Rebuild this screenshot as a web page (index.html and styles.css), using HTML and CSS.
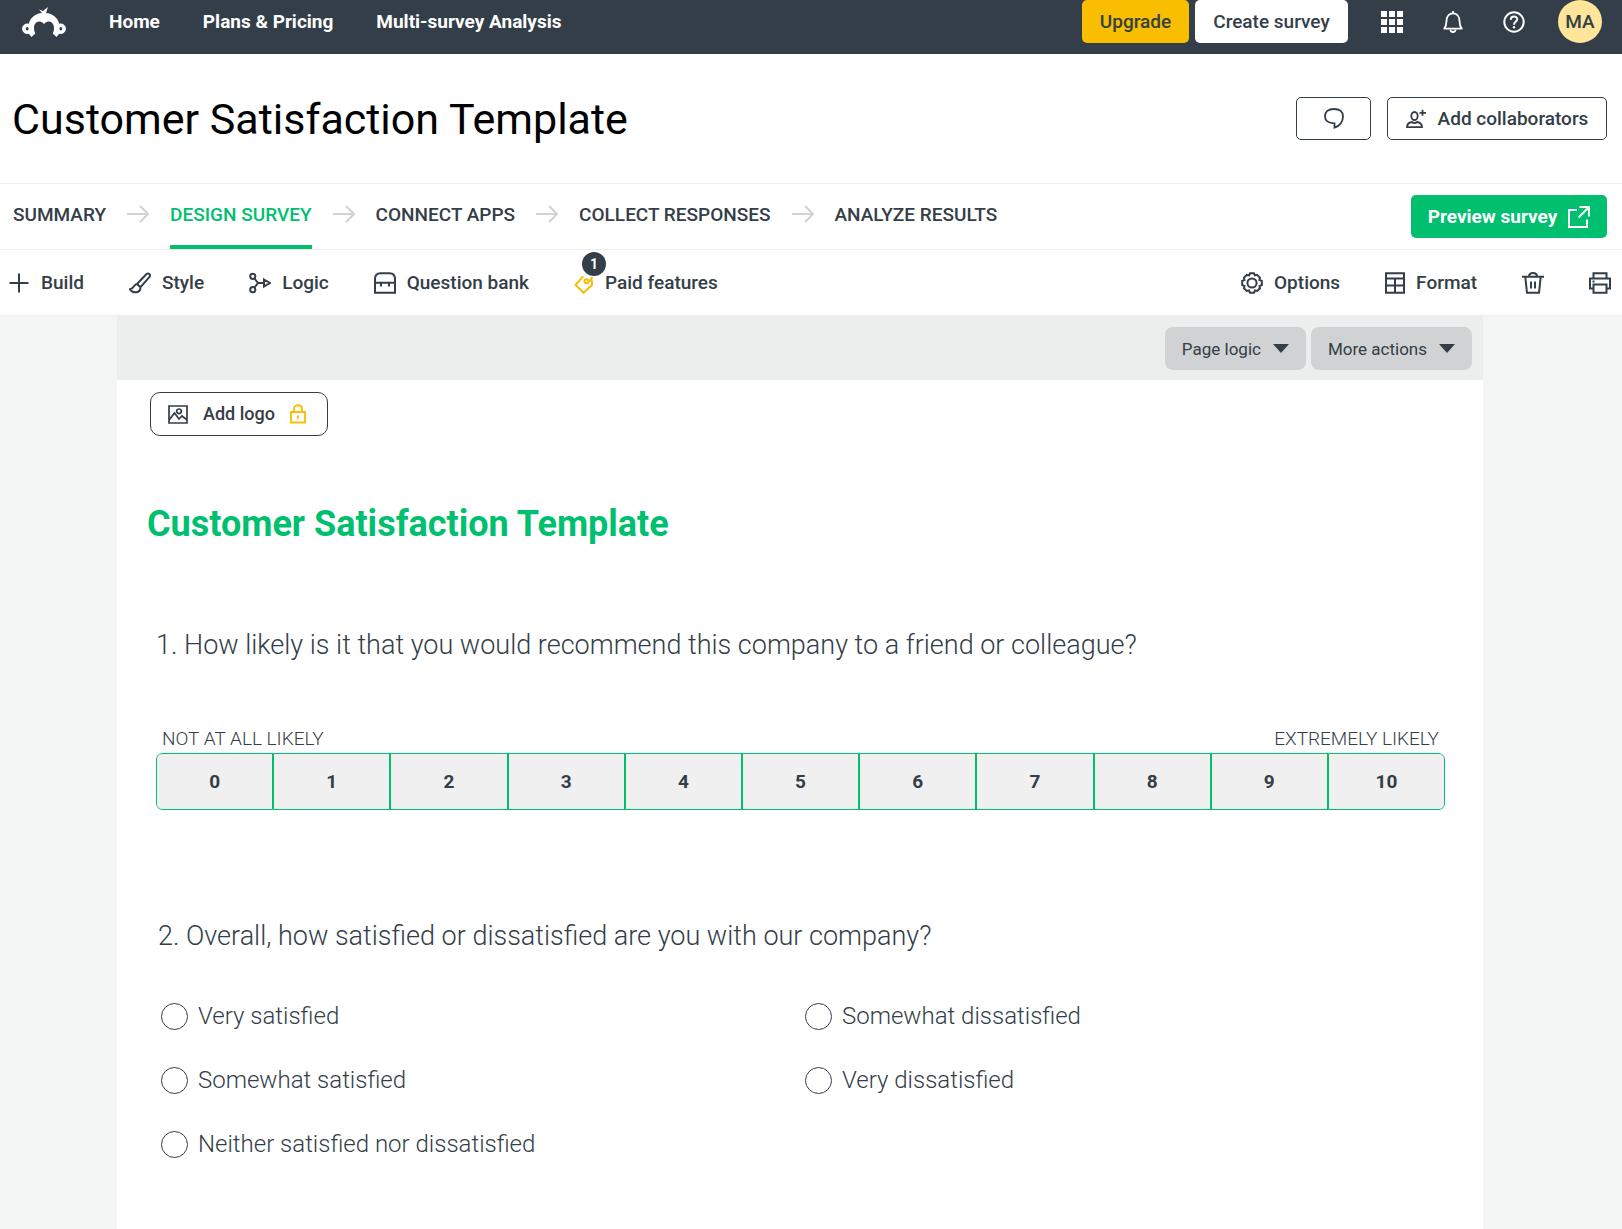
FILE: index.html
```html
<!DOCTYPE html>
<html lang="en">
<head>
<meta charset="utf-8">
<title>Customer Satisfaction Template</title>
<meta name="viewport" content="width=device-width, initial-scale=1">
<link rel="stylesheet" href="styles.css">
</head>
<body>
<header class="topbar">
  <nav class="topnav">
    <a class="brand" href="#" aria-label="Home page">
      <svg width="44" height="30" viewBox="0 0 44 30">
        <path fill="#fff" d="M9.500 30C8.300 28.800 7.500 27.800 7 26.700A5.200 5.200 0 1 1 6.700 16.800C8.500 10.500 13.500 6.500 20 6L17 2.500L21 4L26 0L24 6C30.500 6.500 35.500 10.500 37.300 16.800A5.200 5.200 0 1 1 37 26.700C36.500 27.800 35.700 28.800 34.500 30L30.800 26.500C33.500 20.500 31.500 14.800 27 14.600C24.800 14.500 23.200 15.500 22 17.200C20.800 15.500 19.200 14.500 17 14.600C12.500 14.800 10.500 20.500 13.200 26.500Z"/>
        <ellipse cx="5.200" cy="21.800" rx="1.400" ry="1.800" fill="#333e48"/>
        <ellipse cx="38.800" cy="21.800" rx="1.400" ry="1.800" fill="#333e48"/>
      </svg>
    </a>
    <a href="#">Home</a>
    <a href="#">Plans &amp; Pricing</a>
    <a href="#">Multi-survey Analysis</a>
  </nav>
  <div class="account">
    <button class="btn btn-upgrade" type="button">Upgrade</button>
    <button class="btn btn-create" type="button">Create survey</button>
    <button class="icon-btn" type="button" aria-label="Apps">
      <svg width="22" height="22" viewBox="0 0 22 22" fill="#fff"><path d="M0 0h6v6H0zM8 0h6v6H8zM16 0h6v6h-6zM0 8h6v6H0zM8 8h6v6H8zM16 8h6v6h-6zM0 16h6v6H0zM8 16h6v6H8zM16 16h6v6h-6z"/></svg>
    </button>
    <button class="icon-btn" type="button" aria-label="Notifications">
      <svg width="22" height="22" viewBox="0 0 22 22" fill="none" stroke="#fff" stroke-width="1.800" stroke-linejoin="round"><path d="M11 0v2M2.200 17.600C4 15.500 4.500 14 4.500 10C4.500 5.500 7 2.300 11 2.300S17.500 5.500 17.500 10C17.500 14 18 15.500 19.800 17.600Z"/><path d="M8.500 18.500A2.500 2.500 0 0 0 13.500 18.500"/></svg>
    </button>
    <button class="icon-btn" type="button" aria-label="Help">
      <svg width="22" height="22" viewBox="0 0 22 22" fill="none" stroke="#fff" stroke-width="2"><circle cx="11" cy="11" r="9.700"/><path d="M7.800 8.800C7.800 4.200 14.400 4.600 14.200 8.400C14 10.900 11 10.900 11 13.800"/><circle cx="11" cy="16.200" r="1.200" fill="#fff" stroke="none"/></svg>
    </button>
    <button class="avatar" type="button">MA</button>
  </div>
</header>

<section class="titlebar">
  <h1>Customer Satisfaction Template</h1>
  <div class="title-actions">
    <button class="btn btn-line btn-comment" type="button" aria-label="Comments">
      <svg width="20" height="21" viewBox="0 0 20 21" fill="none" stroke="#333e48" stroke-width="1.800"><path d="M10.500 15.300C4 15.300 1 12.500 1 8.200C1 3.700 4 1 10 1S19 4 19 8.200C19 13.500 16.500 17.500 10.500 19.600Z"/></svg>
    </button>
    <button class="btn btn-line btn-collab" type="button">
      <svg width="20" height="20" viewBox="0 0 20 20" fill="none" stroke="#333e48" stroke-width="1.800"><ellipse cx="8.500" cy="7" rx="3.200" ry="4"/><path d="M1 18.200C1 14.800 2.500 13.600 5.800 13C7.500 14.300 9.500 14.300 11.200 13C14.500 13.600 16 14.800 16 18.200ZM16.500 .8v6M13.500 3.800H20"/></svg>
      Add collaborators
    </button>
  </div>
</section>

<section class="stepbar">
  <nav class="steps">
    <a href="#">SUMMARY</a>
    <svg class="arrow" viewBox="0 0 22 18"><path d="M0 9H21M13 1L21 9L13 17"/></svg>
    <a href="#" class="current" aria-current="step">DESIGN SURVEY</a>
    <svg class="arrow" viewBox="0 0 22 18"><path d="M0 9H21M13 1L21 9L13 17"/></svg>
    <a href="#">CONNECT APPS</a>
    <svg class="arrow" viewBox="0 0 22 18"><path d="M0 9H21M13 1L21 9L13 17"/></svg>
    <a href="#">COLLECT RESPONSES</a>
    <svg class="arrow" viewBox="0 0 22 18"><path d="M0 9H21M13 1L21 9L13 17"/></svg>
    <a href="#">ANALYZE RESULTS</a>
  </nav>
  <button class="btn btn-preview" type="button">Preview survey
    <svg width="22" height="22" viewBox="0 0 22 22" fill="none" stroke="#fff" stroke-width="2"><path d="M9 4H1V21H19V13.500M11.500 1H21V10.500M21 1L10.500 11.500"/></svg>
  </button>
</section>

<section class="toolbar">
  <div class="tools">
    <button class="tool" type="button">
      <svg width="22" height="22" viewBox="0 0 22 22"><path d="M11 1.500v19M1.500 11h19"/></svg>Build</button>
    <button class="tool" type="button">
      <svg width="22" height="22" viewBox="0 0 22 22"><path d="M8 12L17.500 2C19.500 .5 22 2.500 20.500 5L11.500 15.200M8 12C4.500 12 5.500 16.500 1 17.300C4 21.500 11.500 21.500 11.500 15.200ZM8 12L11.500 15.200"/></svg>Style</button>
    <button class="tool" type="button">
      <svg width="22" height="22" viewBox="0 0 22 22"><circle cx="3.800" cy="4.300" r="2.600"/><circle cx="3.800" cy="17.700" r="2.600"/><path d="M5.500 6.500L9 11L5.500 15.500M9 11H15M15 7.500L21 11L15 14.500Z"/></svg>Logic</button>
    <button class="tool" type="button">
      <svg width="22" height="22" viewBox="0 0 22 22"><path d="M1 20.800V7C1 3 3 1.200 6.500 1.200H15.500C19 1.200 21 3 21 7V20.800ZM1 10.800H21M7 10.800V14.500M15 10.800V14.500"/></svg>Question bank</button>
    <button class="tool tool-paid" type="button">
      <svg width="20" height="22" viewBox="0 0 20 22" class="gold"><path d="M9.500 5H8.500L1.500 13L9.500 20.800L18 13V8.500"/><circle cx="12.500" cy="9.300" r="2"/><path d="M14.500 9C17.500 8.500 18 7 17.800 5"/></svg>Paid features<span class="badge">1</span></button>
  </div>
  <div class="tools">
    <button class="tool" type="button">
      <svg width="22" height="22" viewBox="0 0 22 22"><circle cx="11" cy="11" r="4.600"/><path d="M9 1.200H13L13.800 3.400L16 2.800L19 5.700L18.400 8L20.800 9V13L18.500 14L19 16.300L16.200 19L14 18.500L13 20.800H9L8 18.500L5.700 19L2.900 16.300L3.500 14L1.200 13V9L3.500 8L2.900 5.700L5.800 2.900L8.200 3.400Z"/></svg>Options</button>
    <button class="tool" type="button">
      <svg width="20" height="22" viewBox="0 0 20 22"><path d="M1 1.200H19V20.800H1ZM1 6.500H19M1 13.600H19M10 6.500V20.800"/></svg>Format</button>
    <button class="tool" type="button" aria-label="Delete">
      <svg width="22" height="22" viewBox="0 0 22 22"><path d="M0 4.800H22M7 4.500C7 2.300 8 1 11 1S15 2.300 15 4.500M3.300 5L5 20.800H17L18.700 5M9 9.500V16.500M13 9.500V16.500"/></svg></button>
    <button class="tool" type="button" aria-label="Print">
      <svg width="22" height="22" viewBox="0 0 22 22"><path d="M4.500 6.500V1.200H17.500V6.500M4.500 16.500H1V6.500H21V16.500H17.500M4.500 12.500H17.500V20.800H4.500ZM3.500 9.500H5.500"/></svg></button>
  </div>
</section>

<main class="canvas">
  <div class="page-actions">
    <button class="btn btn-grey" type="button">Page logic <span class="caret"></span></button>
    <button class="btn btn-grey" type="button">More actions <span class="caret"></span></button>
  </div>
  <div class="sheet">
    <button class="btn btn-line btn-logo" type="button">
      <svg width="20" height="20" viewBox="0 0 20 20" fill="none" stroke="#333e48" stroke-width="1.700"><path d="M1 2H19V19H1ZM1.500 15.500L6.500 9L11 15L14 12L18.500 15.500"/><circle cx="11" cy="7.300" r="2.300"/></svg>
      Add logo
      <svg width="16" height="20" viewBox="0 0 16 20" fill="none" stroke="#f9be00" stroke-width="1.800"><path d="M1 8H15V18.500H1ZM4 8V5C4 0 12 0 12 5V8M8 11.500V15"/></svg>
    </button>
    <h2>Customer Satisfaction Template</h2>

    <fieldset class="question">
      <legend>1. How likely is it that you would recommend this company to a friend or colleague?</legend>
      <div class="scale-ends"><span>NOT AT ALL LIKELY</span><span>EXTREMELY LIKELY</span></div>
      <div class="scale">
        <button type="button">0</button><button type="button">1</button><button type="button">2</button><button type="button">3</button><button type="button">4</button><button type="button">5</button><button type="button">6</button><button type="button">7</button><button type="button">8</button><button type="button">9</button><button type="button">10</button>
      </div>
    </fieldset>

    <fieldset class="question question-choice">
      <legend>2. Overall, how satisfied or dissatisfied are you with our company?</legend>
      <div class="choices">
        <label><input type="radio" name="satisfaction">Very satisfied</label>
        <label><input type="radio" name="satisfaction">Somewhat satisfied</label>
        <label><input type="radio" name="satisfaction">Neither satisfied nor dissatisfied</label>
        <label><input type="radio" name="satisfaction">Somewhat dissatisfied</label>
        <label><input type="radio" name="satisfaction">Very dissatisfied</label>
      </div>
    </fieldset>
  </div>
</main>
</body>
</html>
```
FILE: styles.css
```css
* { box-sizing: border-box; }

html, body { height: 100%; }

body {
  margin: 0;
  display: flex;
  flex-direction: column;
  background: #fff;
  color: #333e48;
  font-family: Roboto, "Liberation Sans", sans-serif;
  font-size: 19px;
  line-height: 24px;
}

a { color: inherit; text-decoration: none; }

svg { display: block; flex: none; }

button {
  margin: 0;
  padding: 0;
  border: 0;
  background: none;
  color: inherit;
  font: inherit;
  font-weight: 500;
  cursor: pointer;
}

.btn {
  display: flex;
  align-items: center;
  justify-content: center;
  height: 43px;
  padding: 0 16px;
  border-radius: 5px;
  white-space: nowrap;
}

/* Top bar */
.topbar {
  display: flex;
  justify-content: space-between;
  align-items: flex-start;
  height: 54px;
  flex: none;
  padding: 0 20px 0 22px;
  background: #333e48;
}

.topnav {
  display: flex;
  align-items: center;
  gap: 43px;
  height: 43px;
  color: #fff;
  font-weight: 700;
  white-space: nowrap;
}

.account { display: flex; align-items: center; }
.btn-upgrade { min-width: 107px; margin-right: 6px; background: #f9be00; }
.btn-create { min-width: 153px; margin-right: 33px; background: #fff; }
.icon-btn { margin-right: 39px; }
.icon-btn:nth-last-child(2) { margin-right: 33px; }

.avatar {
  width: 44px;
  height: 43px;
  border-radius: 50%;
  background: #ffe599;
}

/* Survey title */
.titlebar {
  display: flex;
  align-items: center;
  justify-content: space-between;
  height: 130px;
  flex: none;
  padding: 0 15px 0 12px;
  border-bottom: 1px solid #edeeee;
}

h1 {
  margin: 0;
  color: #000;
  font-size: 43px;
  font-weight: 400;
  line-height: 46px;
}

.title-actions { display: flex; gap: 16px; }
.btn-line { border: 1px solid #333e48; background: #fff; }
.btn-comment { width: 75px; }
.btn-collab { gap: 12px; min-width: 220px; }

/* Steps */
.stepbar {
  display: flex;
  align-items: center;
  justify-content: space-between;
  height: 66px;
  flex: none;
  padding: 0 15px 0 13px;
  border-bottom: 1px solid #edeeee;
}

.steps {
  display: flex;
  align-self: stretch;
  align-items: center;
  gap: 21px;
  font-weight: 500;
  white-space: nowrap;
}

.steps a {
  display: flex;
  align-items: center;
  align-self: stretch;
  border-bottom: 4px solid transparent;
}

.steps .current { color: #00bf6f; border-color: #00bf6f; }

.arrow {
  width: 22px;
  height: 18px;
  margin-bottom: 6px;
  fill: none;
  stroke: #d0d2d3;
  stroke-width: 2;
}

.btn-preview {
  gap: 11px;
  min-width: 196px;
  background: #00bf6f;
  color: #fff;
  font-weight: 700;
}

/* Toolbar */
.toolbar {
  display: flex;
  align-items: center;
  justify-content: space-between;
  height: 66px;
  flex: none;
  padding: 0 11px 0 8px;
  border-bottom: 1px solid #eceeed;
}

.tools { display: flex; gap: 45px; }

.tool {
  position: relative;
  display: flex;
  align-items: center;
  gap: 11px;
  white-space: nowrap;
}

.tool svg { fill: none; stroke: #333e48; stroke-width: 2; }
.tool .gold { stroke: #f9be00; }

.badge {
  position: absolute;
  left: 8px;
  top: -19px;
  width: 24px;
  border-radius: 50%;
  background: #333e48;
  color: #fff;
  font-size: 14px;
  font-weight: 700;
  line-height: 24px;
}

/* Survey page */
.canvas {
  display: flex;
  flex-direction: column;
  flex: 1 0 auto;
  padding: 0 139px 0 117px;
  background: #f4f6f5;
}

.page-actions {
  display: flex;
  justify-content: flex-end;
  gap: 5px;
  padding: 11px 11px 10px;
  background: #eceeed;
}

.btn-grey {
  gap: 12px;
  padding: 0 17px;
  border-radius: 8px;
  background: #d0d2d3;
  font-size: 17px;
  font-weight: 400;
}

.caret {
  border: 8px solid transparent;
  border-top: 9px solid #333e48;
  border-bottom: 0;
}

.sheet {
  flex: 1;
  padding: 12px 38px 64px 30px;
  background: #fff;
}

.btn-logo {
  gap: 15px;
  height: 44px;
  margin-left: 3px;
  padding: 0 21px 0 17px;
  border-radius: 10px;
  font-size: 18px;
}

h2 {
  margin: 64px 0 77px;
  color: #00bf6f;
  font-size: 36px;
  font-weight: 700;
  line-height: 48px;
}

.question {
  margin: 0 0 0 9px;
  padding: 0;
  border: 0;
  font-weight: 300;
}

legend {
  padding: 0;
  font-size: 27px;
  line-height: 40px;
}

.scale-ends {
  display: flex;
  justify-content: space-between;
  padding: 62px 6px 2px;
}

.scale {
  display: flex;
  overflow: hidden;
  border-radius: 6px;
}

.scale button {
  flex: 1;
  height: 57px;
  border: 1px solid #00bf6f;
  background: #f0f0f0;
  font-weight: 700;
}

.scale button:first-child { border-radius: 6px 0 0 6px; }
.scale button:last-child { border-radius: 0 6px 6px 0; }

.question-choice { margin-top: 106px; }
.question-choice legend { padding-left: 2px; }

.choices {
  display: grid;
  grid-template-rows: repeat(3, 32px);
  grid-template-columns: 1fr 1fr;
  grid-auto-flow: column;
  gap: 32px 4px;
  padding: 44px 0 0 5px;
  font-size: 24px;
}

.choices label { display: flex; align-items: center; gap: 10px; }

.choices input {
  appearance: none;
  width: 27px;
  height: 27px;
  margin: 0;
  border: 1px solid #333e48;
  border-radius: 50%;
}
```
